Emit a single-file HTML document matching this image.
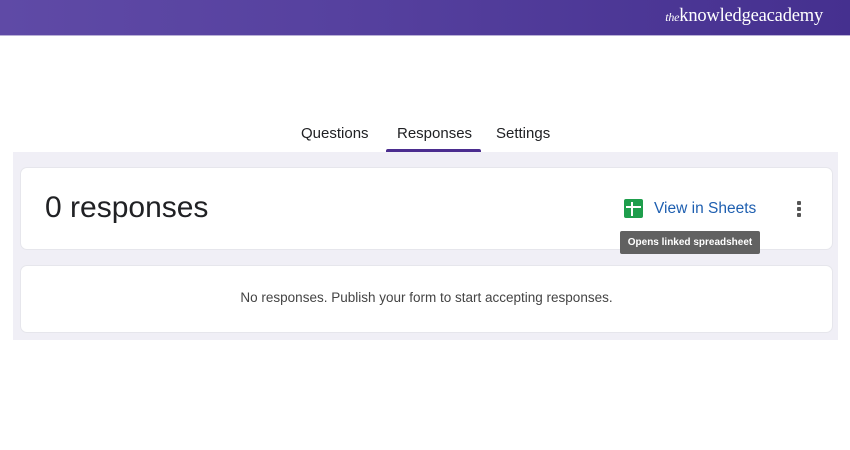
<!DOCTYPE html>
<html><head><meta charset="utf-8"><style>
*{margin:0;padding:0;box-sizing:border-box}
body{width:850px;height:450px;background:#fff;position:relative;overflow:hidden;font-family:"Liberation Sans",sans-serif}
.hdr{position:absolute;left:0;top:0;width:850px;height:36px;background:linear-gradient(90deg,#5f4aa6 0%,#56419f 40%,#45308f 100%);border-bottom:1px solid #b9b0d6}
.logo{position:absolute;right:27px;top:6px;color:#fff;font-family:"Liberation Serif",serif;font-size:18.5px;letter-spacing:-0.2px}
.logo i{font-size:12px}
.panel{position:absolute;left:13px;top:122px;width:825px;height:218px;background:#f0eff6}
.tabs{position:absolute;left:0;top:0;width:825px;height:30px;background:#fff}
.tab{position:absolute;top:3px;font-size:15px;color:#202124}
.ul{position:absolute;left:373px;top:27px;width:95px;height:3px;background:#4b2d8f;border-radius:2px 2px 0 0}
.card{position:absolute;left:7px;width:813px;background:#fff;border:1px solid #e6e6ec;border-radius:7px}
.big{position:absolute;left:24px;top:23px;font-size:30px;color:#202124}
.sh{position:absolute;left:603px;top:31px;width:19px;height:19px;background:#1e9e4c;border-radius:2px}
.sh:before{content:"";position:absolute;left:2px;top:7px;width:15px;height:2px;background:#fff}
.sh:after{content:"";position:absolute;left:7px;top:3px;width:2px;height:14px;background:#fff}
.vs{position:absolute;left:633px;top:32px;font-size:15.5px;color:#1e5fb0}
.dots{position:absolute;left:776px;top:33px;width:4px}
.dots b{display:block;width:4px;height:4px;background:#555;margin-bottom:2px;border-radius:1px}
.tip{position:absolute;left:620px;top:231px;width:140px;height:23px;background:#616161;color:#fff;font-size:10px;font-weight:bold;text-align:center;line-height:23px;border-radius:2px}
.msg{position:absolute;left:0;width:100%;top:24px;text-align:center;font-size:13.5px;color:#444}
</style></head><body>
<div class="hdr"><div class="logo"><i>the</i>knowledge<b style="font-weight:normal">academy</b></div></div>
<div class="panel">
 <div class="tabs">
  <div class="tab" style="left:288px">Questions</div>
  <div class="tab" style="left:384px">Responses</div>
  <div class="tab" style="left:483px">Settings</div>
  <div class="ul"></div>
 </div>
 <div class="card" style="top:45px;height:83px">
  <div class="big">0 responses</div>
  <div class="sh"></div>
  <div class="vs">View in Sheets</div>
  <div class="dots"><b></b><b></b><b></b></div>
 </div>
 <div class="card" style="top:143px;height:68px">
  <div class="msg">No responses. Publish your form to start accepting responses.</div>
 </div>
</div>
<div class="tip">Opens linked spreadsheet</div>
</body></html>
